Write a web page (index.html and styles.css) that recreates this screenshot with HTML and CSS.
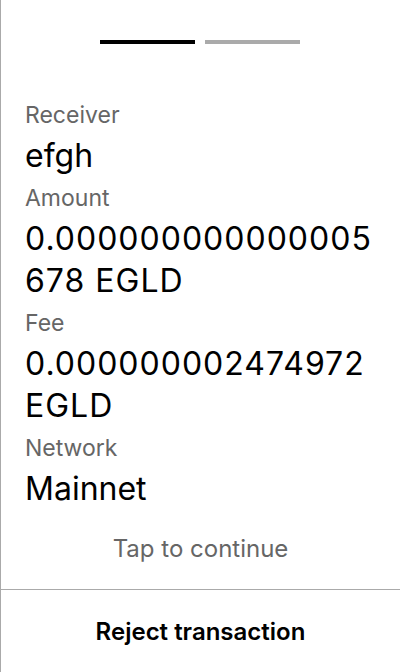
FILE: index.html
```html
<!DOCTYPE html>
<html>
<head>
<meta charset="utf-8">
<link rel="stylesheet" href="styles.css">
</head>
<body>
<div class="screen">
  <div class="main">
    <div class="progress">
      <span class="bar active"></span>
      <span class="bar"></span>
    </div>
    <div class="fields">
      <div class="label">Receiver</div>
      <div class="value">efgh</div>
      <div class="label">Amount</div>
      <div class="value numeric">0.000000000000005678 EGLD</div>
      <div class="label">Fee</div>
      <div class="value numeric">0.000000002474972 EGLD</div>
      <div class="label">Network</div>
      <div class="value">Mainnet</div>
    </div>
    <div class="tap">Tap to continue</div>
  </div>
  <div class="footer">Reject transaction</div>
</div>
</body>
</html>
```
FILE: styles.css
```css
html, body {
  margin: 0;
  padding: 0;
  background: #fff;
}
body {
  font-family: Inter, "Noto Sans", sans-serif;
  color: #000;
}
.screen {
  width: 400px;
  height: 672px;
  box-sizing: border-box;
  border-left: 1px solid #aaa;
  display: flex;
  flex-direction: column;
}
.main {
  flex: 1;
  display: flex;
  flex-direction: column;
  padding: 40px 24px 0 24px;
}
.progress {
  display: flex;
  justify-content: center;
  gap: 10px;
  margin-left: -1px;
}
.bar {
  width: 95px;
  height: 4px;
  background: #aaa;
}
.bar.active {
  background: #000;
}
.fields {
  margin-top: 51px;
  display: flex;
  flex-direction: column;
}
.label {
  font-size: 23px;
  line-height: 40px;
  color: #666;
}
.value {
  font-size: 32px;
  line-height: 42px;
  overflow-wrap: anywhere;
  margin-bottom: 1px;
}
.value.numeric {
  letter-spacing: 1px;
}
.tap {
  margin-top: 23px;
  text-align: center;
  font-size: 24px;
  line-height: 30px;
  color: #666;
}
.footer {
  height: 82px;
  border-top: 1px solid #aaa;
  display: flex;
  align-items: center;
  justify-content: center;
  font-size: 24px;
  font-weight: 600;
}
```
